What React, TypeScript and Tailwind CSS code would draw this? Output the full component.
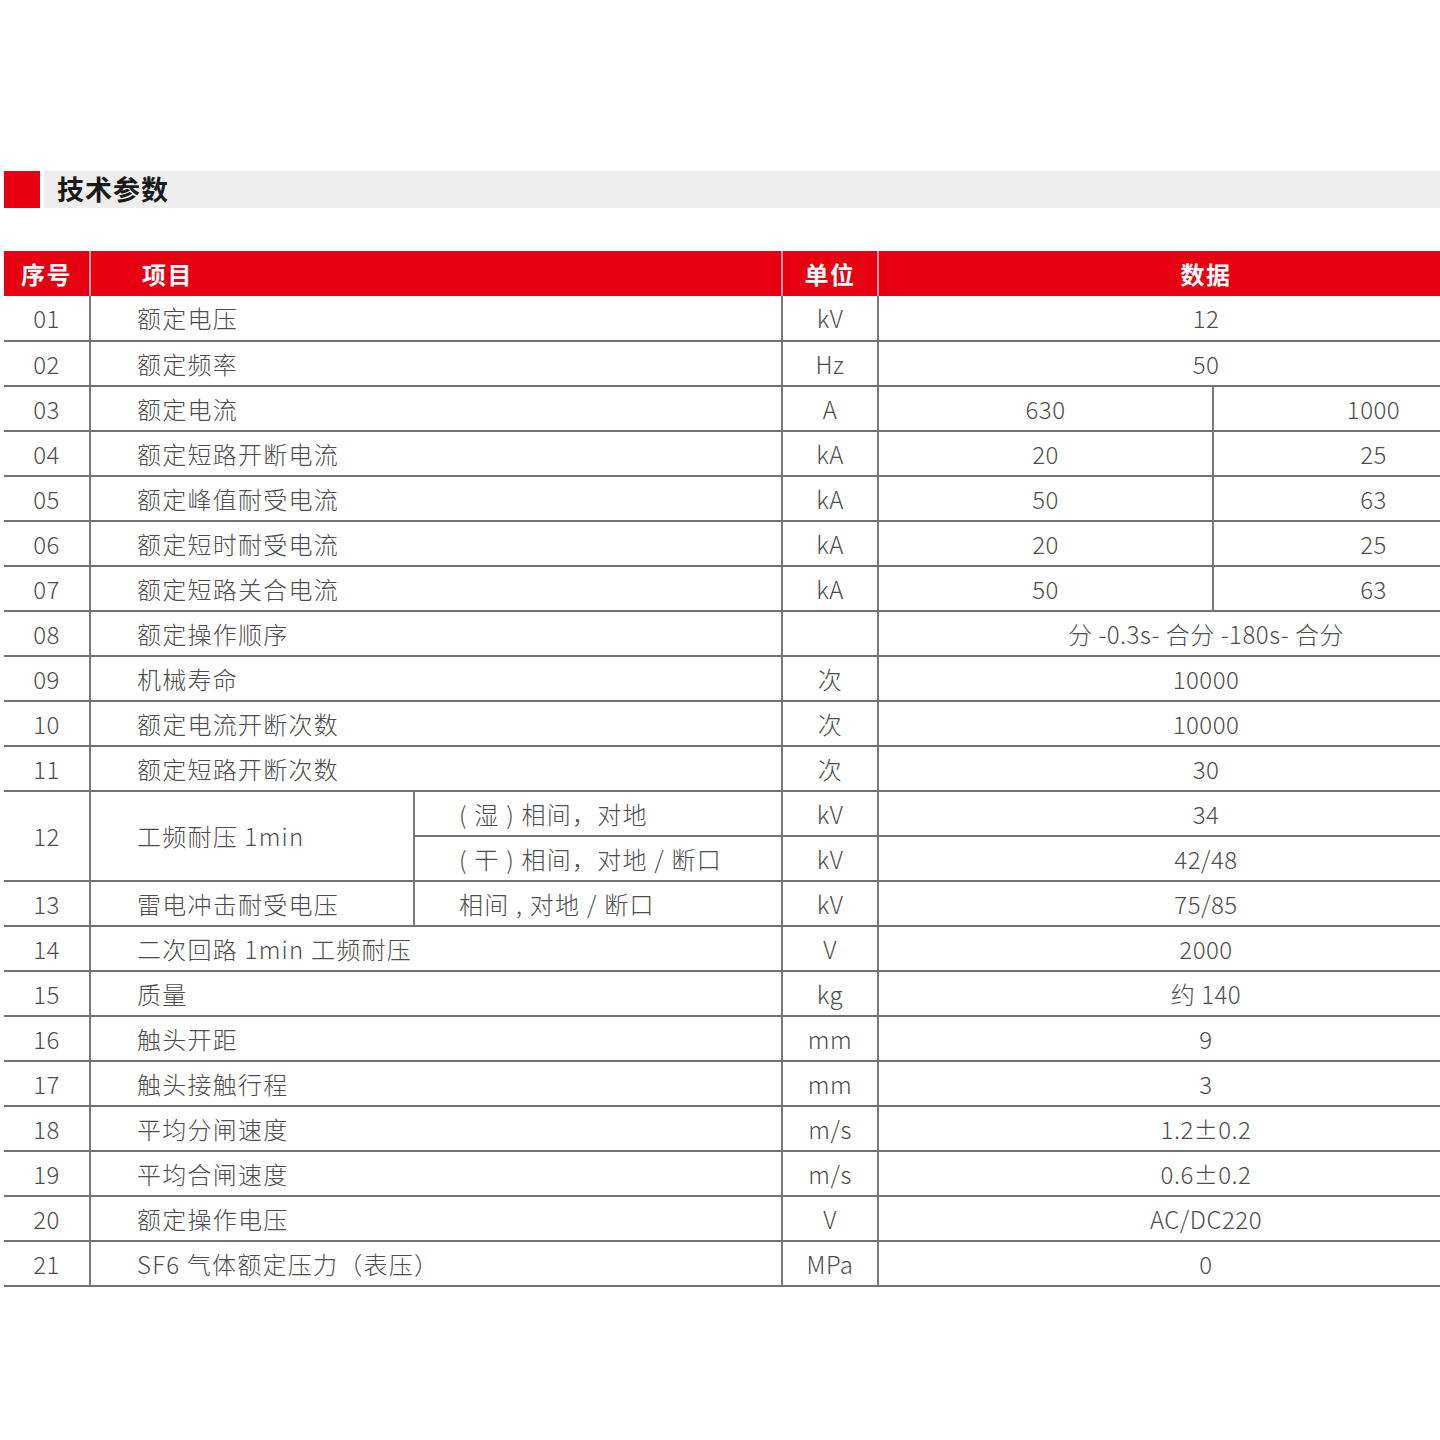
import React from 'react';

type Row = {
  no: string;
  item: string;
  unit: string;
  data?: string;
  split?: [string, string];
};

const rows: Row[] = [
  { no: '01', item: '额定电压', unit: 'kV', data: '12' },
  { no: '02', item: '额定频率', unit: 'Hz', data: '50' },
  { no: '03', item: '额定电流', unit: 'A', split: ['630', '1000'] },
  { no: '04', item: '额定短路开断电流', unit: 'kA', split: ['20', '25'] },
  { no: '05', item: '额定峰值耐受电流', unit: 'kA', split: ['50', '63'] },
  { no: '06', item: '额定短时耐受电流', unit: 'kA', split: ['20', '25'] },
  { no: '07', item: '额定短路关合电流', unit: 'kA', split: ['50', '63'] },
  { no: '08', item: '额定操作顺序', unit: '', data: '分 -0.3s- 合分 -180s- 合分' },
  { no: '09', item: '机械寿命', unit: '次', data: '10000' },
  { no: '10', item: '额定电流开断次数', unit: '次', data: '10000' },
  { no: '11', item: '额定短路开断次数', unit: '次', data: '30' },
];

const rowsAfter: Row[] = [
  { no: '14', item: '二次回路 1min 工频耐压', unit: 'V', data: '2000' },
  { no: '15', item: '质量', unit: 'kg', data: '约 140' },
  { no: '16', item: '触头开距', unit: 'mm', data: '9' },
  { no: '17', item: '触头接触行程', unit: 'mm', data: '3' },
  { no: '18', item: '平均分闸速度', unit: 'm/s', data: '1.2±0.2' },
  { no: '19', item: '平均合闸速度', unit: 'm/s', data: '0.6±0.2' },
  { no: '20', item: '额定操作电压', unit: 'V', data: 'AC/DC220' },
  { no: '21', item: 'SF6 气体额定压力（表压）', unit: 'MPa', data: '0' },
];

const td = 'border-b-2 border-b-[#727272] p-0 align-middle';
const vr = 'border-r-2 border-r-[#7a7a7a]';
const itemCls = 'pl-[46px] tracking-[1.25px]';
const subCls = 'pl-[44px] tracking-[1.25px]';

function PlainRow({ r }: { r: Row }) {
  return (
    <tr className="h-[45px]">
      <td className={`${td} ${vr} text-center`}>{r.no}</td>
      <td colSpan={2} className={`${td} ${vr} ${itemCls}`}>{r.item}</td>
      <td className={`${td} ${vr} text-center`}>{r.unit}</td>
      {r.split ? (
        <>
          <td className={`${td} ${vr} text-center`}>{r.split[0]}</td>
          <td className={`${td} text-center`}>{r.split[1]}</td>
        </>
      ) : (
        <td colSpan={2} className={`${td} text-center`}>{r.data}</td>
      )}
    </tr>
  );
}

export default function App() {
  return (
    <div
      className="w-[1440px] h-[1440px] overflow-hidden bg-white pt-[171px]"
      style={{ fontFamily: '"Noto Sans CJK SC", "Noto Sans", sans-serif' }}
    >
      {/* Section title */}
      <div className="flex h-[37px] pl-[4px]">
        <div className="w-[36px] h-full bg-[#e60012]" />
        <div className="flex-1 ml-[4px] bg-[#eeeeee] flex items-center pl-[13px]">
          <span className="text-[27px] font-bold text-[#1a1a1a] tracking-[1px]">技术参数</span>
        </div>
      </div>

      {/* Params table */}
      <div className="mt-[43px] pl-[4px]">
        <table className="border-collapse table-fixed w-[1529px] text-[24px] tracking-[0.5px] font-light text-[#4d4d4d]">
          <colgroup>
            <col className="w-[86px]" />
            <col className="w-[324px]" />
            <col className="w-[368px]" />
            <col className="w-[96px]" />
            <col className="w-[335px]" />
            <col className="w-[320px]" />
          </colgroup>
          <thead>
            <tr className="h-[45px] bg-[#e60012] text-white text-[24px] tracking-[1.5px] font-bold">
              <th className="border-r-2 border-r-[#f4a0a6] text-center p-0">序号</th>
              <th colSpan={2} className="border-r-2 border-r-[#f4a0a6] text-left pl-[51px] p-0">项目</th>
              <th className="border-r-2 border-r-[#f4a0a6] text-center p-0">单位</th>
              <th colSpan={2} className="text-center p-0">数据</th>
            </tr>
          </thead>
          <tbody>
            {rows.map((r) => (
              <PlainRow key={r.no} r={r} />
            ))}
            <tr className="h-[45px]">
              <td rowSpan={2} className={`${td} ${vr} text-center`}>12</td>
              <td rowSpan={2} className={`${td} ${vr} ${itemCls}`}>工频耐压 1min</td>
              <td className={`${td} ${vr} ${subCls}`}>( 湿 ) 相间，对地</td>
              <td className={`${td} ${vr} text-center`}>kV</td>
              <td colSpan={2} className={`${td} text-center`}>34</td>
            </tr>
            <tr className="h-[45px]">
              <td className={`${td} ${vr} ${subCls}`}>( 干 ) 相间，对地 / 断口</td>
              <td className={`${td} ${vr} text-center`}>kV</td>
              <td colSpan={2} className={`${td} text-center`}>42/48</td>
            </tr>
            <tr className="h-[45px]">
              <td className={`${td} ${vr} text-center`}>13</td>
              <td className={`${td} ${vr} ${itemCls}`}>雷电冲击耐受电压</td>
              <td className={`${td} ${vr} ${subCls}`}>相间 , 对地 / 断口</td>
              <td className={`${td} ${vr} text-center`}>kV</td>
              <td colSpan={2} className={`${td} text-center`}>75/85</td>
            </tr>
            {rowsAfter.map((r) => (
              <PlainRow key={r.no} r={r} />
            ))}
          </tbody>
        </table>
      </div>
    </div>
  );
}
